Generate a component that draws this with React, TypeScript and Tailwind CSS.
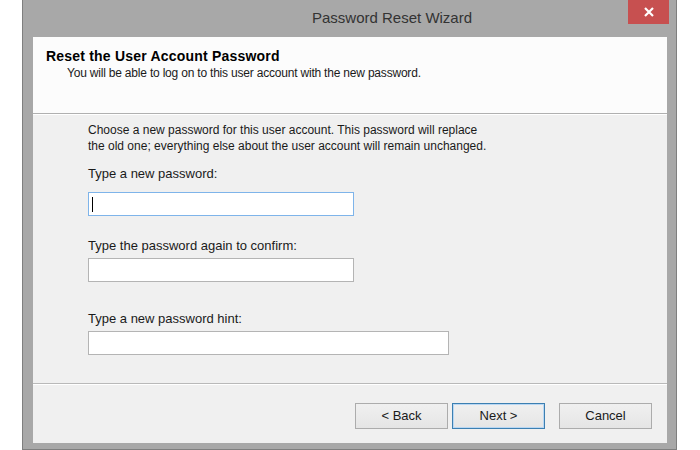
import React from "react"

const font = { fontFamily: '"Liberation Sans", Arial, sans-serif' }

function Field({ width, focused }: { width: string; focused?: boolean }) {
  return (
    <div
      className={`${width} h-[24px] bg-white border flex items-center pl-[3px] ${
        focused ? "border-[#7eb4ea]" : "border-[#b4b4b4]"
      }`}
    >
      {focused && <div className="w-px h-[15px] bg-black" />}
    </div>
  )
}

function WizButton({ label, primary }: { label: string; primary?: boolean }) {
  return (
    <button
      className={`w-[93px] h-[26px] text-[13px] text-[#1a1a1a] border bg-gradient-to-b from-[#f0f0f0] to-[#e5e5e5] ${
        primary ? "border-[#3c7fb1] shadow-[inset_0_0_0_1px_#b9d7f3]" : "border-[#acacac]"
      }`}
    >
      {label}
    </button>
  )
}

export default function App() {
  return (
    <div className="w-[700px] h-[450px] bg-white overflow-hidden" style={font}>
      <div className="ml-[22px] w-[655px] h-[450px] bg-[#a8a8a8] border-x border-b border-[#7f7f7f] flex flex-col">
        {/* Title bar */}
        <div className="h-[37px] flex items-start shrink-0">
          <span className="pl-[289px] pt-[9px] text-[15px] leading-[18px] text-[#333333]">
            Password Reset Wizard
          </span>
          <div className="ml-auto mr-[7px] w-[41px] h-[24px] bg-[#c75050] flex items-center justify-center">
            <svg width="10" height="10" viewBox="0 0 10 10">
              <path d="M1 1L9 9M9 1L1 9" stroke="white" strokeWidth="2.2" />
            </svg>
          </div>
        </div>

        {/* Client area */}
        <div className="flex-1 pl-[10px] pr-[9px] pb-[6px] flex">
          <div className="w-[634px] h-[406px] bg-[#f0f0f0] flex flex-col text-[#1a1a1a]">
            {/* Header */}
            <div className="h-[77px] bg-[#fcfcfc] border-b border-[#b0b0b0] pt-[11px] pl-[13px] shrink-0">
              <div className="text-[14px] leading-[17px] font-bold text-black tracking-[0.2px]">
                Reset the User Account Password
              </div>
              <div className="text-[12px] leading-[16px] pl-[21px] tracking-[-0.2px]">
                You will be able to log on to this user account with the new password.
              </div>
            </div>

            {/* Body */}
            <div className="h-[269px] border-t border-white pl-[55px] pt-[7px] flex flex-col text-[12px] leading-[16px]">
              <p>
                Choose a new password for this user account. This password will replace
                <br />
                the old one; everything else about the user account will remain unchanged.
              </p>
              <div className="mt-[12px] mb-[10px] text-[13px]">Type a new password:</div>
              <Field width="w-[266px]" focused />
              <div className="mt-[22px] mb-[4px] text-[13px]">Type the password again to confirm:</div>
              <Field width="w-[266px]" />
              <div className="mt-[29px] mb-[4px] text-[13px]">Type a new password hint:</div>
              <Field width="w-[361px]" />
            </div>

            {/* Footer */}
            <div className="flex-1 border-t border-[#b9b9b9] shadow-[inset_0_1px_0_#ffffff] flex justify-end items-start pt-[19px] pr-[15px]">
              <div className="flex gap-[4px]">
                <WizButton label="< Back" />
                <WizButton label="Next >" primary />
              </div>
              <div className="ml-[14px]">
                <WizButton label="Cancel" />
              </div>
            </div>
          </div>
        </div>
      </div>
    </div>
  )
}
